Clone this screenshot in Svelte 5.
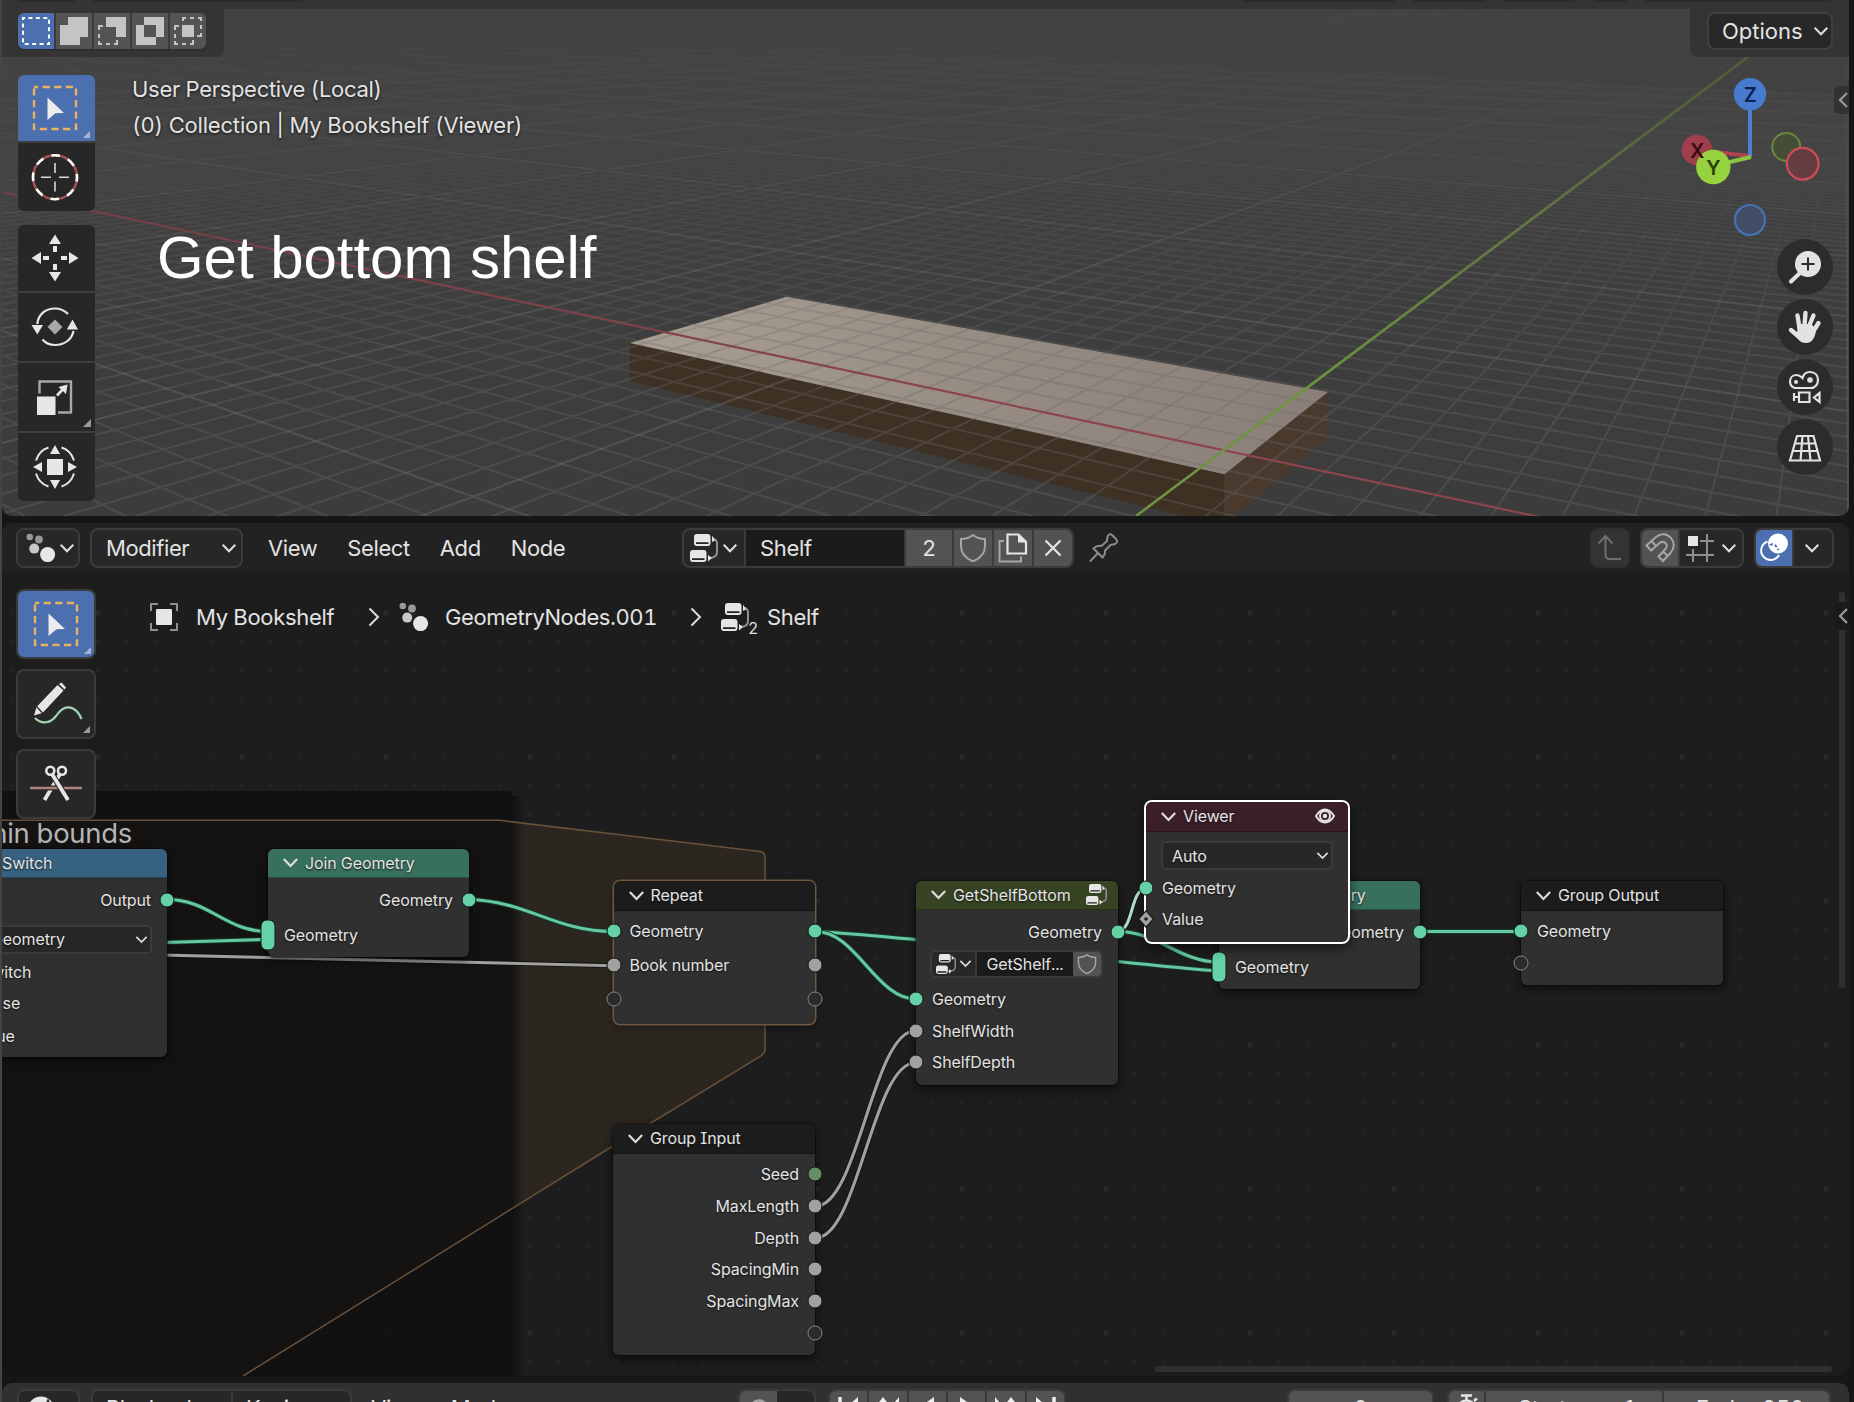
<script>
  // Ground plane projection: the two vanishing points share one horizon
  const origin = [1223, 450];
  const vpX = [-981, -15];
  const vpY = [1846, -15];
  const ka = 0.0221;
  const kb = -0.0312;

  function project(X, Y) {
    const w = 1 + ka * X + kb * Y;
    const x = (origin[0] + ka * X * vpX[0] + kb * Y * vpY[0]) / w;
    const y = (origin[1] + ka * X * vpX[1] + kb * Y * vpY[1]) / w;
    return x.toFixed(1) + ' ' + y.toFixed(1);
  }

  const minW = 0.3;
  function lineX(c) {
    const near = (minW - 1 - ka * c) / kb;
    return 'M' + project(c, near) + 'L' + project(c, -400);
  }
  function lineY(c) {
    const near = (minW - 1 - kb * c) / ka;
    return 'M' + project(near, c) + 'L' + project(500, c);
  }

  let fine = '';
  let bold = '';
  for (let i = -30; i <= 110; i++) {
    if (i === 0) continue;
    if (i % 10 === 0) bold += lineX(i);
    else fine += lineX(i);
  }
  for (let i = -110; i <= 30; i++) {
    if (i === 0) continue;
    if (i % 10 === 0) bold += lineY(i);
    else fine += lineY(i);
  }

  const nodes = [
    { id: 'switch', title: 'Switch', tone: 'blue', x: -35, y: 849, w: 202, h: 207.5, rows: [
      { label: 'Output', out: 'geo', h: 43 },
      { select: 'Geometry', h: 36 },
      { label: 'Switch', h: 29 },
      { label: 'False', h: 34 },
      { label: 'True', h: 31 } ] },
    { id: 'join', title: 'Join Geometry', tone: 'green', x: 268, y: 849, w: 201, h: 108, rows: [
      { label: 'Geometry', out: 'geo', h: 43 },
      { label: 'Geometry', in: 'multi', h: 28 } ] },
    { id: 'repeat', title: 'Repeat', tone: 'dark', zone: true, x: 613.5, y: 881, w: 201.5, h: 143, pad: 3, rows: [
      { label: 'Geometry', in: 'geo', out: 'geo', left: true, h: 34.2 },
      { label: 'Book number', in: 'num', out: 'num', left: true, h: 34.2 },
      { label: '', in: 'empty', out: 'empty', h: 34.2 } ] },
    { id: 'group', title: 'GetShelfBottom', tone: 'olive', badge: 'tree', x: 916, y: 881, w: 202, h: 204, pad: 5, rows: [
      { label: 'Geometry', out: 'geo', h: 33 },
      { picker: 'GetShelf...', h: 35 },
      { label: 'Geometry', in: 'geo', h: 31.8 },
      { label: 'ShelfWidth', in: 'num', h: 31.8 },
      { label: 'ShelfDepth', in: 'num', h: 31.8 } ] },
    { id: 'input', title: 'Group Input', tone: 'dark', x: 613, y: 1124, w: 202, h: 231, pad: 4.5, rows: [
      { label: 'Seed', out: 'int', h: 31.7 },
      { label: 'MaxLength', out: 'num', h: 31.7 },
      { label: 'Depth', out: 'num', h: 31.7 },
      { label: 'SpacingMin', out: 'num', h: 31.7 },
      { label: 'SpacingMax', out: 'num', h: 31.7 },
      { label: '', out: 'empty', h: 31.7 } ] },
    { id: 'join2', title: 'Join Geometry', tone: 'green', x: 1219, y: 881, w: 201, h: 108, rows: [
      { label: 'Geometry', out: 'geo', h: 43 },
      { label: 'Geometry', in: 'multi', h: 28 } ] },
    { id: 'output', title: 'Group Output', tone: 'dark', x: 1521, y: 881, w: 202, h: 104, pad: 4.5, rows: [
      { label: 'Geometry', in: 'geo', h: 31.6 },
      { label: '', in: 'empty', h: 31.6 } ] },
    { id: 'viewer', title: 'Viewer', tone: 'wine', badge: 'eye', active: true, x: 1146, y: 802, w: 202, h: 139.5, rows: [
      { select: 'Auto', h: 40 },
      { label: 'Geometry', in: 'geo', h: 31.6 },
      { label: 'Value', in: 'field', h: 31.6 } ] }
  ];

  const greenLinks = [
    'M167 899.5C210 899.5 225 931.5 268 931.5',
    'M140 943.2L268 939.4',
    'M469 899.5C527 901 555 931.5 613 931.5',
    'M816 931.5C936 938 1099 962 1219 971',
    'M816 931.5C856 931.5 876 999 916 999',
    'M1118 931.5C1158 931.5 1179 962 1219 962',
    'M1420 931.5L1521 931.5'
  ];
  const greyLinks = [
    'M140 954.5L613 965.7',
    'M815 1206.5C859 1206.5 872 1030.5 916 1030.5',
    'M815 1238.2C859 1238.2 872 1062.5 916 1062.5'
  ];
</script>

{#snippet chev(s)}
  <svg class="chev" width={s} height={s} viewBox="0 0 14 14"><path d="M1.5 4.2L7 9.8L12.5 4.2" /></svg>
{/snippet}

{#snippet particles()}
  <svg width="30" height="30" viewBox="0 0 30 30">
    <circle cx="3.8" cy="4" r="3.3" fill="#989898" /><circle cx="13" cy="6.5" r="3.9" fill="#989898" />
    <circle cx="8.2" cy="15.6" r="5" fill="#c8c8c8" /><circle cx="21.6" cy="21.6" r="7.5" fill="#e6e6e6" />
  </svg>
{/snippet}

{#snippet tree(s)}
  <svg width={s} height={s} viewBox="0 0 28 28">
    <path d="M23 4.5C26 5.5 27 6.5 27 9V18C27 21.5 25.5 23.5 20 24" fill="none" stroke="#8f8f8f" stroke-width="2" />
    <rect x="4" y="0" width="16.5" height="12" rx="3" fill="#e6e6e6" /><rect x="0" y="16" width="16.5" height="12" rx="3" fill="#e6e6e6" />
    <path d="M6 9.2H18.5M2 25.2H14.5" stroke="#222" stroke-width="1.8" />
    <path d="M22 1.5L25 6.5L22 8Z M18 21L22 24L18 27.5Z" fill="#e6e6e6" />
  </svg>
{/snippet}

{#snippet shield(s)}
  <svg width={s} height={s} viewBox="0 0 28 28"><path d="M14 1C11 3.6 7 5 2 5V12C2 19.5 7 24.5 14 27.4C21 24.5 26 19.5 26 12V5C21 5 17 3.6 14 1Z" fill="none" stroke="#a6a6a6" stroke-width="2" /></svg>
{/snippet}

{#snippet selectTool()}
  <svg width="76" height="66" viewBox="-38 -33 76 66">
    <rect x="-21" y="-21" width="42" height="42" fill="none" stroke="#e8b25e" stroke-width="2.4" stroke-dasharray="7.2 4.4" stroke-dashoffset="3" />
    <path d="M-7.5 -10.5L9 5L0.5 5.3L-7.5 12Z" fill="#ececec" />
    <path d="M35 23V30H28Z" fill="#a9b4cc" />
  </svg>
{/snippet}

{#snippet socket(kind, side)}
  {#if kind === 'field'}
    <svg class="socket {side}" width="18" height="18" viewBox="0 0 18 18"><path d="M9 0.8L16.500 9L9 17.200L1.500 9Z" fill="#a1a1a1" stroke="#151515" stroke-width="1.2" /><circle cx="9" cy="9" r="1.8" fill="#1a1a1a" /></svg>
  {:else}
    <i class="socket {kind} {side}"></i>
  {/if}
{/snippet}

<div class="app">
  <section class="viewport">
    <svg class="scene" width="1847" height="516" viewBox="2 0 1847 516">
      <defs>
        <linearGradient id="bg" x1="0" y1="0" x2="0" y2="1"><stop offset="0" stop-color="#434343" /><stop offset="0.45" stop-color="#3f3f3f" /><stop offset="1" stop-color="#3c3c3c" /></linearGradient>
        <linearGradient id="fineFade" gradientUnits="userSpaceOnUse" x1="0" y1="40" x2="0" y2="400">
          <stop offset="0" stop-color="#686868" stop-opacity="0" /><stop offset="0.3" stop-color="#686868" stop-opacity="0.1" /><stop offset="0.7" stop-color="#686868" stop-opacity="0.25" /><stop offset="1" stop-color="#686868" stop-opacity="0.34" />
        </linearGradient>
        <linearGradient id="boldFade" gradientUnits="userSpaceOnUse" x1="0" y1="30" x2="0" y2="330">
          <stop offset="0" stop-color="#747474" stop-opacity="0.03" /><stop offset="0.4" stop-color="#747474" stop-opacity="0.14" /><stop offset="1" stop-color="#747474" stop-opacity="0.36" />
        </linearGradient>
        <linearGradient id="green" gradientUnits="userSpaceOnUse" x1="1748" y1="57" x2="1300" y2="400"><stop offset="0" stop-color="#4f5c3c" /><stop offset="0.5" stop-color="#5f7840" /><stop offset="1" stop-color="#6f9340" /></linearGradient>
        <linearGradient id="red" gradientUnits="userSpaceOnUse" x1="0" y1="0" x2="1000" y2="0"><stop offset="0" stop-color="#713e45" /><stop offset="1" stop-color="#8c444e" /></linearGradient>
        <linearGradient id="wood" gradientUnits="userSpaceOnUse" x1="640" y1="320" x2="1300" y2="430"><stop offset="0" stop-color="#a89e92" /><stop offset="0.45" stop-color="#988e84" /><stop offset="1" stop-color="#8b8079" /></linearGradient>
      </defs>
      <rect x="2" width="1847" height="516" fill="url(#bg)" />
      <path d="M630 343L1224.5 474.3L1224.5 526L630 381Z" fill="#3e3022" />
      <path d="M1224.5 474.3L1328 392L1327 439L1224.5 524Z" fill="#493a2d" />
      <path d="M630 343L786.6 296.7L1328 392L1224.5 474.3Z" fill="url(#wood)" />
      <path d={fine} fill="none" stroke="url(#fineFade)" stroke-width="2" />
      <path d={bold} fill="none" stroke="url(#boldFade)" stroke-width="2" />
      <path d="M2 192L1540 517" stroke="url(#red)" stroke-width="2.2" />
      <path d="M1136 516L1748 57" stroke="url(#green)" stroke-width="2.6" />
    </svg>

    <div class="vp-strip">
      <i class="stub s1"></i><i class="stub s2"></i><i class="stub s3"></i><i class="stub s4"></i><i class="stub s5"></i><i class="stub s6"></i><i class="stub s7"></i>
    </div>
    <div class="vp-head">
      <div class="tab left">
        <div class="modes">
          <span class="mode on"><svg width="28" height="28" viewBox="0 0 28 28"><rect x="1" y="1" width="26" height="26" fill="none" stroke="#fff" stroke-width="2" stroke-dasharray="4 3.43" stroke-dashoffset="2" /></svg></span>
          <span class="mode"><svg width="28" height="28" viewBox="0 0 28 28"><path d="M8 0H28V20H20V28H0V8H8Z" fill="#c4c4c4" /></svg></span>
          <span class="mode"><svg width="28" height="28" viewBox="0 0 28 28"><path d="M8 0H28V20H18V10H8Z" fill="#c4c4c4" /><path d="M5 9H1V13M1 17V21M1 24V27H4M8 27H12M16 27H19V23" fill="none" stroke="#c4c4c4" stroke-width="2" /></svg></span>
          <span class="mode"><svg width="28" height="28" viewBox="0 0 28 28"><path fill-rule="evenodd" d="M8 0H28V20H20V28H0V8H8ZM8 8V20H20V8Z" fill="#c4c4c4" /></svg></span>
          <span class="mode"><svg width="28" height="28" viewBox="0 0 28 28"><rect x="8" y="8" width="12" height="12" fill="#c4c4c4" /><path d="M5 9H1V13M1 17V21M1 24V27H4M8 27H12M16 27H19V23M9 4V1H12M16 1H20M24 1H27V4M27 8V12M27 16V19H23" fill="none" stroke="#c4c4c4" stroke-width="2" /></svg></span>
        </div>
      </div>
      <div class="tab right"><div class="options"><span>Options</span>{@render chev(16)}</div></div>
    </div>

    <div class="vp-body">
      <div class="tools">
        <div class="stack">
          <div class="tool blue">{@render selectTool()}</div>
          <div class="tool"><svg width="77" height="68" viewBox="18 142.5 77 68">
            <circle cx="55" cy="176.7" r="22" fill="none" stroke="#a45454" stroke-width="2.4" />
            <circle cx="55" cy="176.7" r="22" fill="none" stroke="#fff" stroke-width="2.6" stroke-dasharray="8.64 8.64" stroke-dashoffset="4.32" />
            <path d="M55 162.5V172.5M55 181V191M41 176.7H51M59 176.7H69" stroke="#d8d8d8" stroke-width="1.6" /></svg></div>
        </div>
        <div class="stack">
          <div class="tool"><svg width="77" height="66" viewBox="18 225 77 66"><g fill="#e6e6e6">
            <path d="M55 234.5L61 244H49Z M55 281.5L61 272H49Z M31.5 258L41 252V264Z M78.5 258L69 252V264Z" />
            <path d="M53 246H57V252H53Z M53 264H57V270H53Z M43 256H49V260H43Z M61 256H67V260H61Z" /></g></svg></div>
          <div class="tool"><svg width="77" height="68" viewBox="18 293 77 68">
            <path d="M55 319.5L62.5 327L55 334.5L47.5 327Z" fill="#a8a8a8" />
            <path d="M37.3 324C38 315 45 308.5 55 308.5C60 308.5 64.500 310.500 68 314M73.500 331C72 339 65 345 55 345C50 345 45.500 343 42.500 339.500" fill="none" stroke="#e6e6e6" stroke-width="2.2" />
            <path d="M31.500 325H43L37.300 334.500Z M66.800 329.500H78L72.500 319.500Z" fill="#e6e6e6" /></svg></div>
          <div class="tool"><svg width="77" height="68" viewBox="18 363 77 68">
            <path d="M39.500 393.500V381.500H71V412.500H58" fill="none" stroke="#a8a8a8" stroke-width="2.4" />
            <rect x="37" y="396.5" width="18.500" height="18.500" fill="#e6e6e6" />
            <path d="M57 395.500L64 388" stroke="#e6e6e6" stroke-width="2.6" /><path d="M67.500 384.500L66 394L58.500 387Z" fill="#e6e6e6" />
            <path d="M91 419V427H83Z" fill="#9a9a9a" /></svg></div>
          <div class="tool"><svg width="77" height="68" viewBox="18 433 77 68"><g fill="#e6e6e6">
            <rect x="47" y="459" width="16" height="16" /><path d="M55 445L60 454H50Z M55 489L60 480H50Z M33 467L42 462V472Z M77 467L68 462V472Z" /></g>
            <path d="M36 460.500C38 454 42 449.500 48.500 447.500M61.500 447.500C68 449.500 72 454 74 460.500M74 473.500C72 480 68 484.500 61.500 486.500M48.500 486.500C42 484.500 38 480 36 473.500" fill="none" stroke="#e6e6e6" stroke-width="2" /></svg></div>
        </div>
      </div>
      <div class="info">
        <p>User Perspective (Local)</p>
        <p class="second">(0) Collection | My Bookshelf (Viewer)</p>
        <h1>Get bottom shelf</h1>
      </div>
      <div class="nav">
        <svg class="gizmo" width="160" height="182" viewBox="1673 57 160 182">
          <circle cx="1786.3" cy="147" r="14" fill="#434d37" stroke="#6c863e" stroke-width="2" />
          <path d="M1697 150L1750 156" stroke="#b0434f" stroke-width="4" />
          <circle cx="1697" cy="150" r="15.300" fill="#a03f4b" />
          <path d="M1750 94V157" stroke="#4a7fd2" stroke-width="4" />
          <path d="M1713 166L1751 157" stroke="#8fc33f" stroke-width="4" />
          <circle cx="1713.300" cy="167" r="17.200" fill="#96d13f" />
          <circle cx="1750" cy="94.300" r="16.200" fill="#467bcf" />
          <circle cx="1802.700" cy="163.700" r="15.800" fill="#653c42" stroke="#cf4d5b" stroke-width="2.200" />
          <circle cx="1750" cy="220" r="15" fill="#404d65" stroke="#4672b4" stroke-width="2.200" />
          <text x="1697" y="157.500" fill="#3a0d14">X</text><text x="1713.300" y="174.500" fill="#26400a">Y</text><text x="1750" y="102" fill="#0c2350">Z</text>
        </svg>
        <div class="round"><svg width="56" height="56" viewBox="1777 239 56 56"><circle cx="1808" cy="264" r="13" fill="#e2e2e2" /><path d="M1801 272L1791 281.500" stroke="#e2e2e2" stroke-width="4" stroke-linecap="round" /><path d="M1808 257.500V270.500M1801.500 264H1814.500" stroke="#2c2c2c" stroke-width="2" /></svg></div>
        <div class="round"><svg width="56" height="56" viewBox="1777 299 56 56"><path d="M1799.500 328L1797.500 315.500M1804.500 325L1805.500 313M1809.500 325L1813.500 315.500M1813.500 331L1818.500 323M1798 336L1791 330" stroke="#e2e2e2" stroke-width="4.400" stroke-linecap="round" fill="none" /><path d="M1797.300 324H1811.500L1816 329.500C1815.500 337 1812.500 343 1806 343C1799.500 343 1797 338 1794.500 334L1797.500 331Z" fill="#e2e2e2" /></svg></div>
        <div class="round"><svg width="56" height="56" viewBox="1777 359 56 56"><g fill="none" stroke="#e2e2e2" stroke-width="2.200"><path d="M1795 388C1791 387 1790 384 1790 381.500C1790 377.500 1793 375 1796.500 375C1799 375 1801 376.500 1802.500 378C1803.500 374 1806.500 372 1810 372C1815 372 1818 375.500 1818 380C1818 384.500 1815 388 1810.500 388Z" /><path d="M1799 392.500H1809.500V402H1799Z M1794 393V401M1794 397H1799M1819.500 393V402L1814 397.500Z" /></g><circle cx="1796" cy="382" r="2" fill="#e2e2e2" /><circle cx="1810" cy="380" r="2.800" fill="#e2e2e2" /></svg></div>
        <div class="round"><svg width="56" height="56" viewBox="1777 419 56 56"><path d="M1797 436H1813.500L1820 460.500H1790ZM1794.500 443.500H1815.500M1792.500 451H1817.500M1802.500 436L1800.500 460.500M1808 436L1810.500 460.500" fill="none" stroke="#e2e2e2" stroke-width="2.200" /></svg></div>
      </div>
    </div>
    <div class="side-tab"><svg width="12" height="18" viewBox="0 0 12 18"><path d="M10 2L3 9L10 16" /></svg></div>
  </section>

  <section class="editor">
    <header class="ed-head">
      <div class="box type">{@render particles()}{@render chev(16)}</div>
      <div class="box modifier"><span>Modifier</span>{@render chev(16)}</div>
      <nav class="menus"><span>View</span><span>Select</span><span>Add</span><span>Node</span></nav>
      <div class="box datablock">
        <span class="cell tree-cell">{@render tree(28)}{@render chev(16)}</span>
        <span class="cell name">Shelf</span>
        <span class="cell lit users">2</span>
        <span class="cell lit">{@render shield(28)}</span>
        <span class="cell lit"><svg width="30" height="30" viewBox="0 0 30 30"><path d="M6 8H1.500V28.500H23V23.500" fill="none" stroke="#a6a6a6" stroke-width="2" /><path d="M9.500 1.500H20.500L28 9V20.500H9.500Z" fill="none" stroke="#e6e6e6" stroke-width="2.200" /><path d="M20 1V9.500H28.500Z" fill="#e6e6e6" /></svg></span>
        <span class="cell lit last"><svg width="18" height="18" viewBox="0 0 18 18"><path d="M1.500 1.500L16.500 16.500M16.500 1.500L1.500 16.500" stroke="#e6e6e6" stroke-width="2.200" /></svg></span>
      </div>
      <svg class="pin" width="30" height="30" viewBox="0 0 30 30"><path d="M1 28.500L9 20M4.500 15.500L13.500 24.500C16 22 16.500 20.500 16 17.500L21.500 12L26 11C29 9 28.500 8 27 6L23 2C21.500 0.500 20 1 18.500 3.500L18 8L12.500 13C9.500 12.500 7 13 4.500 15.500Z" fill="none" stroke="#8c8c8c" stroke-width="2" /></svg>
      <div class="right-tools">
        <div class="box up"><svg width="26" height="28" viewBox="0 0 26 28"><path d="M1.500 9.500L8.500 2L15.500 9.500M8.500 2.500V21Q8.500 25 13 25H24" fill="none" stroke="#6e6e6e" stroke-width="2" /></svg></div>
        <div class="box snap">
          <span class="cell lit"><svg width="30" height="30" viewBox="0 0 30 30"><path d="M1.500 12.500L11 4C16 0 22 0.500 26 5C30 10 29 15.500 25.500 20L18 28L13.500 23.500L20.500 16C22.500 13.500 22 11.500 20.500 10C18.500 8.500 16.500 8.500 14.500 10L6 17.500Z M6.500 8L11 13M18 18.500L22.500 23" fill="none" stroke="#a6a6a6" stroke-width="2" /></svg></span>
          <span class="cell snap-to"><svg width="28" height="28" viewBox="0 0 28 28"><rect x="2" y="2" width="10" height="10" fill="#e6e6e6" /><path d="M14 7H28M0 21H28M7 15V28M21 0V28" stroke="#8f8f8f" stroke-width="2" /></svg>{@render chev(16)}</span>
        </div>
        <div class="box overlay">
          <span class="cell accent"><svg width="30" height="30" viewBox="0 0 30 30"><circle cx="19" cy="10.500" r="10" fill="#fff" /><path d="M8.500 8.500A9.500 9.500 0 1 0 20 22" fill="none" stroke="#fff" stroke-width="2" /><path d="M11 12C14 10 17 12 19.500 17" fill="none" stroke="#4a6cae" stroke-width="2" stroke-dasharray="3 2" /></svg></span>
          <span class="cell more">{@render chev(16)}</span>
        </div>
      </div>
    </header>

    <div class="canvas">
      <div class="plane">
        <svg class="wires" width="1849" height="1376" viewBox="0 0 1849 1376">
          <defs>
            <pattern id="dots" x="97.700" y="613" width="144" height="144" patternUnits="userSpaceOnUse">
              {#each [0, 1, 2, 3, 4] as i}
                {#each [0, 1, 2, 3, 4] as j}
                  <circle cx={14.4 + i * 28.8} cy={14.4 + j * 28.8} r={i === 0 && j === 0 ? 2.3 : 1.4} fill={i === 0 && j === 0 ? '#2b2b2b' : '#262626'} />
                {/each}
              {/each}
            </pattern>
            <linearGradient id="edge" x1="0" y1="0" x2="1" y2="0"><stop offset="0" stop-color="#000" stop-opacity="0.4" /><stop offset="1" stop-color="#000" stop-opacity="0" /></linearGradient>
          </defs>
          <rect width="1870" height="1400" fill="url(#dots)" transform="translate(-14.400 -14.400)" />
          <path d="M-10 820.300H499L760 851.500Q765 852.500 765 857V1049Q765 1053 761 1056L600 1154L243 1376H-10Z" fill="#2c2620" />
          <rect x="513" y="796" width="12" height="700" fill="url(#edge)" />
          <rect x="-10" y="791" width="523" height="700" rx="6" fill="#0d0d0d" opacity="0.72" />
          <path d="M-10 820.300H499L760 851.500Q765 852.500 765 857V1049Q765 1053 761 1056L600 1154L243 1376" fill="none" stroke="#695039" stroke-width="1.500" />
          {#each greyLinks as d}
            <path {d} class="wire-edge" /><path {d} class="wire grey" />
          {/each}
          {#each greenLinks as d}
            <path {d} class="wire-edge green" /><path {d} class="wire" />
          {/each}
          <path d="M1118 931.500C1134 929 1130 890 1146 888" class="wire-edge" /><path d="M1118 931.500C1134 929 1130 890 1146 888" class="wire pale" />
        </svg>
        <div class="frame-label">Fit within bounds</div>

        {#each nodes as n (n.id)}
          <article class="node" class:zone={n.zone} class:active={n.active} style="left:{n.x}px;top:{n.y}px;width:{n.w}px;height:{n.h}px">
            <div class="title {n.tone}">
              {@render chev(17)}
              <span class="name">{n.title}</span>
              {#if n.badge === 'tree'}{@render tree(21)}{/if}
              {#if n.badge === 'eye'}
                <svg width="20" height="16" viewBox="0 0 20 16"><path d="M1 8C4 3 7 1.500 10 1.500S16 3 19 8C16 13 13 14.500 10 14.500S4 13 1 8Z" fill="none" stroke="#e6e6e6" stroke-width="2" /><circle cx="10" cy="8" r="5" fill="none" stroke="#e6e6e6" stroke-width="2" /><circle cx="10" cy="8" r="2.200" fill="#e6e6e6" /></svg>
              {/if}
            </div>
            <div class="rows" style="padding-top:{n.pad ?? 0}px">
              {#each n.rows as r}
                <div class="row" class:end={r.out && !r.left} style="height:{r.h}px">
                  {#if r.in}{@render socket(r.in, 'l')}{/if}
                  {#if r.select}
                    <div class="select"><span>{r.select}</span>{@render chev(13)}</div>
                  {:else if r.picker}
                    <div class="picker"><span class="ptree">{@render tree(20)}{@render chev(13)}</span><span class="pname">{r.picker}</span><span class="pshield">{@render shield(20)}</span></div>
                  {:else}
                    <span>{r.label}</span>
                  {/if}
                  {#if r.out}{@render socket(r.out, 'r')}{/if}
                </div>
              {/each}
            </div>
          </article>
        {/each}
      </div>

      <div class="ed-tools">
        <div class="tool boxed blue">{@render selectTool()}</div>
        <div class="tool boxed"><svg width="76" height="66" viewBox="18 671 76 66">
          <path d="M34 715.500L36.500 707L57.500 685L63.500 690.500L42.500 713Z M59 684L61.500 682.500L66 687.500L64.500 689.500Z" fill="#e6e6e6" /><path d="M36.500 706.500L42.500 713" stroke="#282828" stroke-width="1.300" />
          <path d="M35 718C42 725 51 723 56 716C62 707 68 706 73 708.500C77.500 711 80 715 81.500 719" fill="none" stroke="#a5d3b3" stroke-width="2.200" /><path d="M90 726V733H83Z" fill="#9a9a9a" /></svg></div>
        <div class="tool boxed"><svg width="76" height="66" viewBox="18 751 76 66">
          <path d="M60 774L44.500 800" stroke="#e6e6e6" stroke-width="3.800" />
          <path d="M30 788H82" stroke="#282828" stroke-width="5" />
          <path d="M30 788H82" stroke="#b0827d" stroke-width="2.600" />
          <path d="M52 774L68 800" stroke="#282828" stroke-width="6" />
          <path d="M52 774L68 800" stroke="#e6e6e6" stroke-width="3.800" />
          <circle cx="50.300" cy="770.700" r="4" fill="#282828" stroke="#e6e6e6" stroke-width="2.600" /><circle cx="62" cy="770.700" r="4" fill="#282828" stroke="#e6e6e6" stroke-width="2.600" /></svg></div>
      </div>
      <div class="crumbs">
        <svg width="28" height="28" viewBox="0 0 28 28"><path d="M1 8V1H8M20 1H27V8M27 20V27H20M8 27H1V20" fill="none" stroke="#8f8f8f" stroke-width="2" /><rect x="6" y="6" width="16" height="16" rx="1" fill="#e6e6e6" /></svg>
        <span class="c1">My Bookshelf</span>
        <svg class="sep" width="12" height="20" viewBox="0 0 12 20"><path d="M1.500 1.500L10 10L1.500 18.500" /></svg>
        <span class="ci">{@render particles()}</span>
        <span class="c2">GeometryNodes.001</span>
        <svg class="sep" width="12" height="20" viewBox="0 0 12 20"><path d="M1.500 1.500L10 10L1.500 18.500" /></svg>
        <span class="ct">{@render tree(28)}<sub>2</sub></span>
        <span class="c3">Shelf</span>
      </div>
      <i class="vbar"></i><i class="hbar"></i>
      <div class="side-tab"><svg width="12" height="18" viewBox="0 0 12 18"><path d="M10 2L3 9L10 16" /></svg></div>
    </div>
  </section>

  <section class="timeline">
    <div class="tl type"><svg width="30" height="30" viewBox="0 0 30 30"><circle cx="15" cy="15" r="13.500" fill="#e6e6e6" /><path d="M22 3L17 15H27Z" fill="#282828" /></svg></div>
    <div class="tl pair"><span>Playback</span><span>Keying</span></div>
    <nav><span>View</span><span>Marker</span></nav>
    <div class="tl auto"><span><svg width="20" height="20" viewBox="0 0 20 20"><circle cx="10" cy="10" r="8.500" fill="none" stroke="#a6a6a6" stroke-width="2.500" /></svg></span><span></span></div>
    <div class="tl transport">
      <span><svg width="26" height="24" viewBox="0 0 26 24"><path d="M4 0V24" stroke="#eee" stroke-width="3.500" /><path d="M22 0V24L8 12Z" fill="#eee" /></svg></span>
      <span><svg width="26" height="24" viewBox="0 0 26 24"><path d="M8 0L15 9L8 18L1 9Z M24 0V20L14 12Z" fill="#eee" /></svg></span>
      <span><svg width="26" height="24" viewBox="0 0 26 24"><path d="M20 0V24L3 12Z" fill="#eee" /></svg></span>
      <span><svg width="26" height="24" viewBox="0 0 26 24"><path d="M6 0V24L23 12Z" fill="#eee" /></svg></span>
      <span><svg width="26" height="24" viewBox="0 0 26 24"><path d="M18 0L25 9L18 18L11 9Z M2 0V20L12 12Z" fill="#eee" /></svg></span>
      <span><svg width="26" height="24" viewBox="0 0 26 24"><path d="M22 0V24" stroke="#eee" stroke-width="3.500" /><path d="M4 0V24L18 12Z" fill="#eee" /></svg></span>
    </div>
    <div class="tl frame"><span>0</span></div>
    <div class="tl range"><span class="clock"><svg width="24" height="28" viewBox="0 0 24 28"><path d="M6 1.500H17M11.500 1V6M19 7L22 4.500" stroke="#e6e6e6" stroke-width="2.400" /><circle cx="11.500" cy="16" r="9.500" fill="none" stroke="#e6e6e6" stroke-width="2.400" /></svg></span><span class="val"><b>Start</b><b>1</b></span><span class="val end"><b>End</b><b>250</b></span></div>
  </section>
</div>

<style>
  :global(body) { margin: 0; background: #161616; }
  .app { box-sizing: border-box; width: 1854px; height: 1402px; overflow: hidden; display: flex; flex-direction: column; gap: 7px; padding-right: 5px; border-left: 2px solid #444; background: #161616; color: #e3e3e3; font: 22px/1 Inter, sans-serif; letter-spacing: -0.300px; font-feature-settings: 'cv08', 'tnum'; }
  svg { display: block; flex: none; }
  p, h1 { margin: 0; font-weight: 400; }
  .chev path { fill: none; stroke: #dedede; stroke-width: 1.800; }

  .viewport { position: relative; height: 516px; flex: none; overflow: hidden; border-radius: 0 0 10px 10px; }
  .scene { position: absolute; left: 0; top: 0; }
  .vp-strip, .vp-head, .vp-body { position: relative; display: flex; }
  .vp-strip { height: 9px; background: #343434; align-items: flex-start; }
  .stub { height: 2px; background: #2b2b2b; border-radius: 0 0 5px 5px; flex: none; }
  .s1 { width: 58px; margin-left: 16px; } .s2 { width: 211px; margin-left: 16px; } .s3 { width: 152px; margin-left: 940px; } .s4 { width: 73px; margin-left: 18px; }
  .s5 { width: 71px; margin-left: 18px; } .s6 { width: 33px; margin-left: 19px; } .s7 { width: 187px; margin-left: 17px; }
  .vp-head { justify-content: space-between; height: 48px; }
  .tab { box-sizing: border-box; height: 48px; background: #343434; padding-top: 4px; }
  .tab.left { width: 222px; padding-left: 16px; border-radius: 0 0 8px 0; }
  .tab.right { width: 159px; padding: 3px 16px 0 17px; border-radius: 0 0 0 8px; }
  .modes { display: flex; gap: 1.500px; width: 188px; height: 36px; border-radius: 6px; overflow: hidden; background: #3a3a3a; box-shadow: 0 1px 1px #2b2b2b; }
  .mode { flex: 1; display: flex; align-items: center; justify-content: center; background: #545454; }
  .mode.on { background: #4c6fb0; }
  .options { box-sizing: border-box; height: 38px; width: 126px; border: 2px solid #404040; border-radius: 8px; background: #282828; display: flex; align-items: center; justify-content: space-between; padding: 0 2px 0 13px; letter-spacing: 0; }
  .vp-body { height: 459px; }
  .tools { width: 77px; padding: 18px 0 0 16px; display: flex; flex-direction: column; gap: 14px; flex: none; }
  .stack { display: flex; flex-direction: column; gap: 2px; border-radius: 6px; overflow: hidden; background: #3e3e3e; flex: none; }
  .tool { background: #272727; display: flex; flex: none; }
  .tool.blue { background: #4c6fb0; }
  .stack .tool.blue svg { margin-left: -1px; }
  .info { flex: 1; padding: 14px 0 0 37px; text-shadow: 0 1px 3px #111; }
  .info p { line-height: 36px; height: 36px; }
  .info .second { letter-spacing: -0.180px; }
  .info h1 { margin: 80px 0 0 25px; font: 60px/70px 'Liberation Sans', Arial, sans-serif; letter-spacing: -0.050px; color: #fff; text-shadow: none; }
  .nav { width: 160px; padding-right: 16px; display: flex; flex-direction: column; align-items: flex-end; gap: 4px; }
  .gizmo { margin-bottom: -4px; }
  .gizmo text { font: 600 20px Inter, sans-serif; text-anchor: middle; }
  .round { width: 56px; height: 56px; border-radius: 50%; background: #2c2c2c; flex: none; }
  .side-tab { position: absolute; right: 0; top: 86px; width: 15px; height: 28px; border-radius: 6px 0 0 6px; background: #323232; display: flex; align-items: center; justify-content: flex-end; }
  .side-tab path { fill: none; stroke: #9b9b9b; stroke-width: 2.200; }

  .editor { height: 853px; flex: none; display: flex; flex-direction: column; border-radius: 10px; overflow: hidden; background: #1d1d1d; }
  .ed-head { box-sizing: border-box; height: 49px; flex: none; display: flex; align-items: center; background: #222; padding-left: 14px; }
  .box { box-sizing: border-box; height: 40px; border: 2px solid #3b3b3b; border-radius: 8px; background: #272727; display: flex; align-items: center; overflow: hidden; flex: none; }
  .box.type { width: 64px; padding-left: 8px; gap: 3px; }
  .box.modifier { width: 153px; margin-left: 10px; padding: 0 4px 0 14px; justify-content: space-between; letter-spacing: -0.400px; }
  .menus { width: 414px; margin-left: 25px; display: flex; gap: 30px; flex: none; letter-spacing: -0.400px; }
  .datablock { width: 392px; }
  .cell { width: 38px; height: 100%; display: flex; align-items: center; justify-content: center; border-left: 2px solid #3b3b3b; flex: none; }
  .cell:first-child { border-left: 0; }
  .cell.lit { background: #535353; }
  .cell.last { flex: 1; }
  .tree-cell { width: 60px; gap: 4px; }
  .cell.name { box-sizing: border-box; width: 160px; justify-content: flex-start; padding-left: 14px; background: #1b1b1b; }
  .cell.users { box-sizing: border-box; width: 48px; }
  .pin { margin-left: 15px; }
  .right-tools { margin-left: auto; padding-right: 15px; display: flex; gap: 10px; }
  .box.up { width: 40px; background: #333; border-color: #303030; justify-content: center; }
  .box.snap { width: 104px; }
  .box.snap .cell { width: 36px; } .box.snap .snap-to { width: 62px; gap: 7px; }
  .box.overlay { width: 80px; }
  .box.overlay .cell { width: 36px; } .cell.accent { background: #4c6fb0; } .box.overlay .more { width: 36px; }

  .canvas { position: relative; flex: 1; display: flex; overflow: hidden; }
  .plane { position: absolute; left: -2px; top: -572px; width: 1849px; height: 1376px; }
  .wires { position: absolute; left: 0; top: 0; }
  .wire { fill: none; stroke: #66c8a0; stroke-width: 3.100; }
  .wire.grey { stroke: #a0a0a0; } .wire.pale { stroke: #b1dccb; }
  .wire-edge { fill: none; stroke: #111; stroke-width: 4.800; } .wire-edge.green { stroke: #143c2e; }
  .frame-label { position: absolute; right: 1717px; top: 817px; font-size: 27.500px; line-height: 32px; color: #b4b4b4; white-space: nowrap; }

  .node { position: absolute; border-radius: 6px; background: #303030; box-shadow: 0 3px 9px 1px rgba(0, 0, 0, 0.550), 0 0 0 1px rgba(10, 10, 10, 0.450); font-size: 16px; letter-spacing: -0.100px; text-shadow: 0 1px 2px #111; }
  .node.zone { box-shadow: 0 0 0 1.500px #6f563f, 0 3px 9px rgba(0, 0, 0, 0.400); }
  .node.active { box-shadow: 0 0 0 2px #fff, 0 4px 10px 3px rgba(0, 0, 0, 0.500); }
  .title { box-sizing: border-box; height: 29px; padding: 0 11px 1px 14px; display: flex; align-items: center; gap: 6px; border-radius: 6px 6px 0 0; border-bottom: 1px solid rgba(0, 0, 0, 0.300); }
  .title .name { flex: 1; white-space: nowrap; }
  .blue.title { background: #36617f; } .green.title { background: #38705e; } .olive.title { background: #374423; }
  .dark.title { height: 30px; background: #1c1c1c; } .wine.title { height: 30px; background: #3a1e28; padding-right: 13px; }
  .row { position: relative; box-sizing: border-box; display: flex; align-items: center; padding: 0 16px; }
  .row.end { justify-content: flex-end; }
  .socket { position: absolute; top: 50%; box-sizing: border-box; }
  .socket.l { left: 0; transform: translate(-50%, -50%); } .socket.r { right: 0; transform: translate(50%, -50%); }
  i.socket { width: 15px; height: 15px; border-radius: 50%; border: 1.500px solid #151515; background: #a1a1a1; }
  i.geo { background: #64d2a6; } i.int { background: #648f64; }
  i.empty { border: 1.500px solid #858585; background: #2b2b2b; }
  i.multi { height: 31px; width: 15px; border-radius: 6.500px; background: #64d2a6; }
  .select { box-sizing: border-box; flex: 1; height: 29px; margin: 0 -1px; border: 2px solid #3b3b3b; border-radius: 5px; background: #272727; display: flex; align-items: center; justify-content: space-between; padding: 0 2px 0 9px; }
  .active .select { margin-top: 7px; }
  .picker { box-sizing: border-box; height: 28px; width: 173px; margin: -4px -2px 0; display: flex; border: 2px solid #3b3b3b; border-radius: 6px; overflow: hidden; background: #272727; }
  .ptree { width: 43px; display: flex; align-items: center; justify-content: center; gap: 3px; }
  .pname { flex: 1; background: #1b1b1b; border-left: 2px solid #3b3b3b; display: flex; align-items: center; justify-content: center; }
  .pshield { width: 28px; background: #535353; display: flex; align-items: center; justify-content: center; }

  .ed-tools { position: relative; padding: 17px 0 0 14px; display: flex; flex-direction: column; gap: 10px; flex: none; }
  .boxed { border: 2px solid #3b3b3b; border-radius: 8px; height: 66px; width: 76px; overflow: hidden; }
  .crumbs { position: relative; height: 30px; margin: 30px 0 0 54px; display: flex; align-items: center; white-space: nowrap; }
  .c1 { width: 172px; margin-left: 18px; } .ci { margin-left: 19px; } .c2 { width: 245px; margin-left: 16px; letter-spacing: -0.420px; } .ct { display: flex; width: 46px; margin-left: 19px; }
  .ct sub { font-size: 16px; align-self: flex-end; line-height: 12px; margin: 0 0 -3px -1px; }
  .sep path { fill: none; stroke: #dcdcdc; stroke-width: 2; }
  .vbar { position: absolute; right: 4px; top: 20px; width: 6px; height: 396px; border-radius: 3px; background: #303030; }
  .hbar { position: absolute; right: 17px; bottom: 4px; width: 677px; height: 6px; border-radius: 3px; background: #303030; }
  .canvas .side-tab { top: 30px; background: #1a1a1a; }

  .timeline { height: 40px; flex: none; display: flex; background: #303030; border-radius: 10px 10px 0 0; padding: 6px 0 0 15px; }
  .tl { box-sizing: border-box; height: 40px; border: 2px solid #3b3b3b; border-radius: 8px; background: #272727; display: flex; flex: none; overflow: hidden; }
  .tl.type { width: 63px; padding: 4px 0 0 7px; }
  .tl.pair { width: 261px; margin-left: 11px; line-height: 35px; }
  .tl.pair span:first-child { width: 125px; padding-left: 13px; border-right: 2px solid #3b3b3b; }
  .tl.pair span:last-child { padding-left: 13px; }
  .timeline nav { display: flex; gap: 30px; width: 367px; margin-left: 19px; line-height: 39px; flex: none; }
  .tl.auto { width: 78px; }
  .tl.auto span { width: 37px; padding-top: 8px; display: flex; justify-content: center; } .tl.auto span:first-child { background: #535353; }
  .transport { width: 238px; margin-left: 12px; background: #3b3b3b; gap: 2px; }
  .transport span { flex: 1; background: #535353; display: flex; justify-content: center; padding-top: 6px; }
  .tl.frame { width: 147px; margin-left: 221px; background: #535353; justify-content: center; line-height: 34px; }
  .tl.range { width: 384px; margin-left: 13px; background: #3b3b3b; gap: 2px; }
  .range span { background: #535353; display: flex; }
  .clock { width: 35px; justify-content: center; padding-top: 3px; }
  .val { box-sizing: border-box; width: 176px; justify-content: space-between; line-height: 34px; padding: 0 25px 0 32px; }
  .val.end { width: 165px; }
  .val b { font-weight: 400; }
</style>
